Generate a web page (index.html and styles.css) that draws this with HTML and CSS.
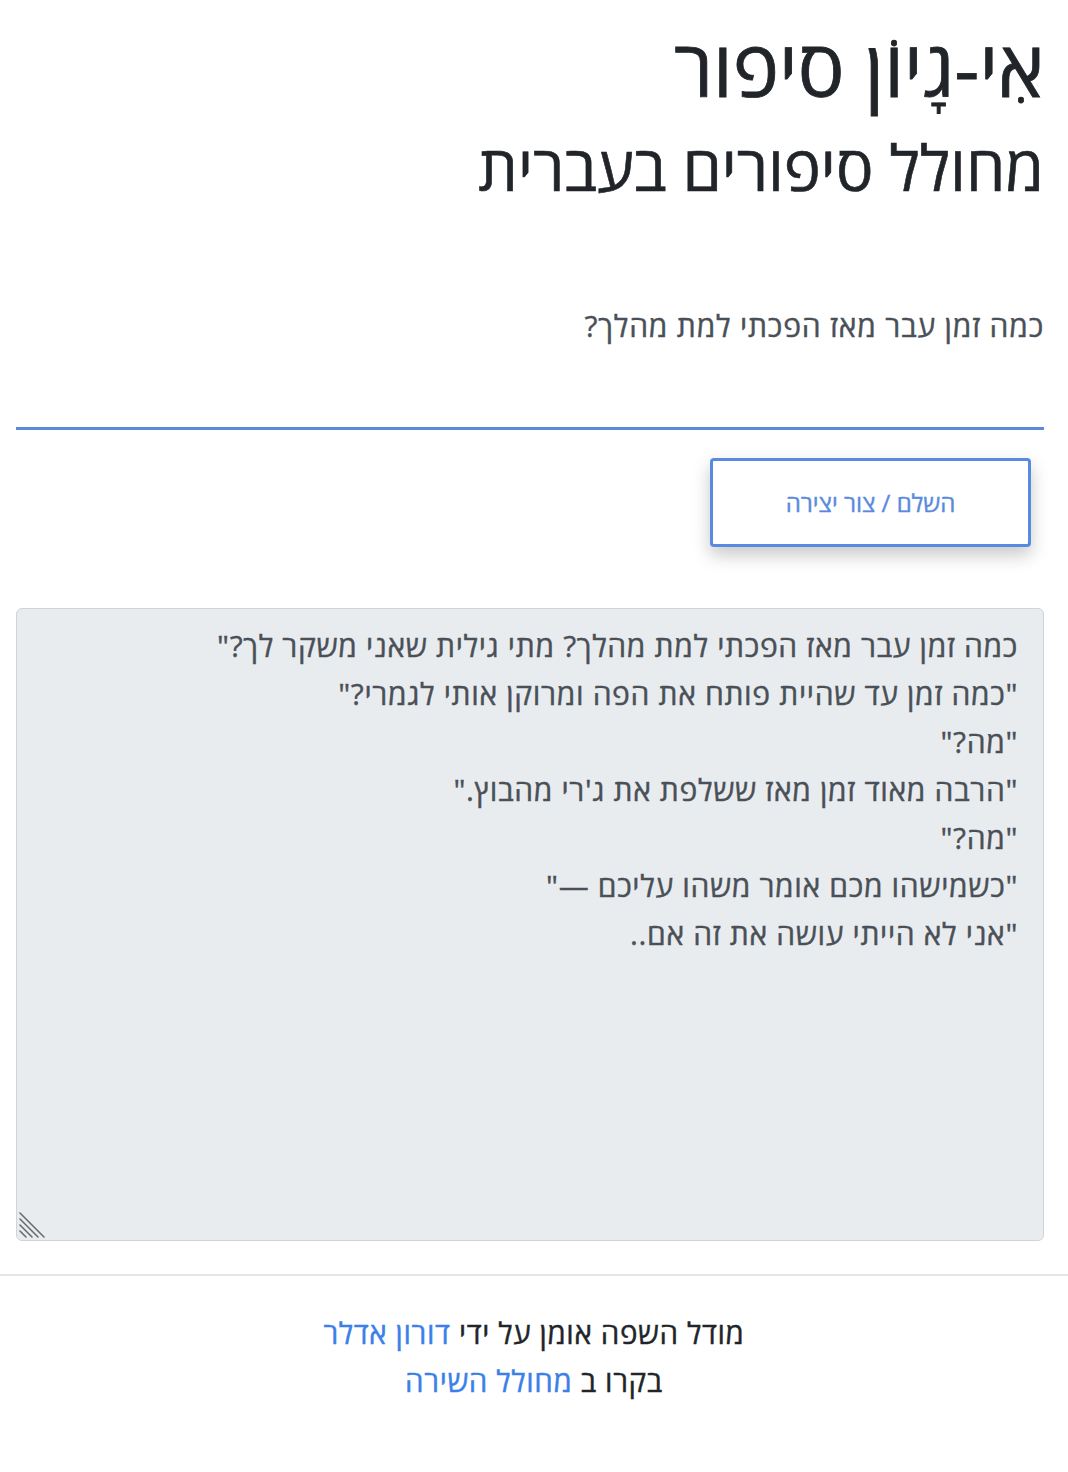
FILE: index.html
```html
<!DOCTYPE html>
<html lang="he" dir="rtl">
<head>
<meta charset="utf-8">
<title>אִי-גָיוֹן סיפור</title>
<link rel="stylesheet" href="styles.css">
</head>
<body>
<main class="container">
  <header class="header">
    <h1 class="title">אִי-גָיוֹן סיפור</h1>
    <h2 class="subtitle">מחולל סיפורים בעברית</h2>
  </header>
  <form class="form">
    <label class="prompt-label" for="prompt">כמה זמן עבר מאז הפכתי למת מהלך?</label>
    <input class="prompt-input" id="prompt" type="text">
    <div class="actions">
      <button class="btn-generate" type="button">השלם / צור יצירה</button>
    </div>
    <div class="output-wrap">
      <textarea class="output" readonly>כמה זמן עבר מאז הפכתי למת מהלך? מתי גילית שאני משקר לך?"
"כמה זמן עד שהיית פותח את הפה ומרוקן אותי לגמרי?"
"מה?"
"הרבה מאוד זמן מאז ששלפת את ג'רי מהבוץ."
"מה?"
"כשמישהו מכם אומר משהו עליכם —"
"אני לא הייתי עושה את זה אם..</textarea>
      <svg class="resize-grip" width="26" height="26" viewBox="0 0 26 26" aria-hidden="true">
        <g stroke="#6b6b6b" stroke-width="1.6" stroke-linecap="round">
          <line x1="1" y1="1" x2="25" y2="25"/>
          <line x1="1" y1="7" x2="19" y2="25"/>
          <line x1="1" y1="13" x2="13" y2="25"/>
          <line x1="1" y1="19" x2="7" y2="25"/>
        </g>
      </svg>
    </div>
  </form>
</main>
<hr class="divider">
<footer class="footer">
  <p class="credit">מודל השפה אומן על ידי <a href="#">דורון אדלר</a></p>
  <p class="credit">בקרו ב <a href="#">מחולל השירה</a></p>
</footer>
</body>
</html>
```
FILE: styles.css
```css
html, body {
  margin: 0;
  padding: 0;
  background: #fff;
}
body {
  font-family: "Open Sans", "Liberation Sans", sans-serif;
  color: #212529;
}
.container {
  padding: 0 24px 0 16px;
}
.header {
  padding-top: 21px;
}
.title {
  margin: 0;
  font-size: 78px;
  font-weight: 400;
  line-height: 1.2;
  -webkit-text-stroke: 0.8px #212529;
}
.subtitle {
  margin: 16px 0 0;
  font-size: 62.5px;
  font-weight: 400;
  line-height: 72px;
  -webkit-text-stroke: 0.6px #212529;
}
.form {
  display: flex;
  flex-direction: column;
  margin-top: 103px;
}
.prompt-label {
  font-size: 30px;
  font-weight: 400;
  letter-spacing: 0.8px;
  color: #495057;
  line-height: 40px;
  -webkit-text-stroke: 0.4px #495057;
}
.prompt-input {
  box-sizing: border-box;
  height: 84px;
  margin: 0;
  padding: 0;
  border: 0;
  border-bottom: 3px solid #5a8ad9;
  background: transparent;
  outline: none;
  font: inherit;
}
.actions {
  display: flex;
  justify-content: flex-start;
  padding: 28px 13px 0;
}
.btn-generate {
  box-sizing: border-box;
  width: 321px;
  height: 89px;
  background: #fff;
  border: 3px solid #5a8ae0;
  border-radius: 4px;
  box-shadow: 0 8px 18px rgba(0, 0, 0, 0.22);
  color: #5a8ae0;
  font-family: inherit;
  font-size: 24px;
  font-weight: 400;
  -webkit-text-stroke: 0.4px #5a8ae0;
}
.output-wrap {
  position: relative;
  margin-top: 61px;
}
.output {
  display: block;
  box-sizing: border-box;
  width: 100%;
  margin: 0;
  height: 633px;
  padding: 13px 25px;
  background: #e9ecef;
  border: 1px solid #ced4da;
  border-radius: 6px;
  color: #495057;
  font-family: inherit;
  font-size: 30px;
  font-weight: 400;
  letter-spacing: 0.65px;
  line-height: 48px;
  resize: none;
  outline: none;
  -webkit-text-stroke: 0.4px #495057;
}
.resize-grip {
  position: absolute;
  left: 3px;
  bottom: 3px;
}
.divider {
  margin: 33px 0 0;
  border: 0;
  border-top: 2px solid #e6e6e6;
}
.footer {
  text-align: center;
  padding-top: 33px;
}
.credit {
  margin: 0;
  font-size: 29.5px;
  font-weight: 400;
  letter-spacing: 0.64px;
  line-height: 48px;
  color: #212529;
  -webkit-text-stroke: 0.4px #212529;
}
.credit a {
  color: #3a80e8;
  text-decoration: none;
  -webkit-text-stroke: 0.4px #3a80e8;
}
```
